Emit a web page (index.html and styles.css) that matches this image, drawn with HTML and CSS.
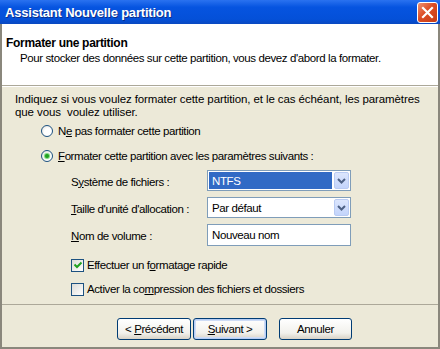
FILE: index.html
```html
<!DOCTYPE html>
<html>
    <head>
        <link rel="stylesheet" href="styles.css">
    </head>
    <body>
        <div class="window">
            <div class="titlebar">
                <span class="title">Assistant Nouvelle partition</span>
                <span class="close">
                    <svg width="13" height="13" viewBox="0 0 13 13"><path d="M2 2 L11 11 M11 2 L2 11" stroke="#FFFFFF" stroke-width="2.2" stroke-linecap="square"/></svg>
                </span>
            </div>
            <div class="frame">
                <div class="header">
                    <div class="heading">Formater une partition</div>
                    <div class="subheading">Pour stocker des données sur cette partition, vous devez d'abord la formater.</div>
                </div>
                <div class="main">
                    <p class="intro">Indiquez si vous voulez formater cette partition, et le cas échéant, les paramètres<br>que vous&nbsp; voulez utiliser.</p>
                    <div class="option">
                        <span class="radio"></span>
                        <span>N<u>e</u> pas formater cette partition</span>
                    </div>
                    <div class="option">
                        <span class="radio checked"></span>
                        <span><u>F</u>ormater cette partition avec les paramètres suivants :</span>
                    </div>
                    <div class="fields">
                        <span class="label">S<u>y</u>stème de fichiers :</span>
                        <div class="select">
                            <span class="value selected">NTFS</span>
                            <span class="drop"><svg width="9" height="6" viewBox="0 0 9 6"><path d="M1 1 L4.5 4.5 L8 1" fill="none" stroke="#4D6185" stroke-width="2"/></svg></span>
                        </div>
                        <span class="label"><u>T</u>aille d'unité d'allocation :</span>
                        <div class="select">
                            <span class="value">Par défaut</span>
                            <span class="drop"><svg width="9" height="6" viewBox="0 0 9 6"><path d="M1 1 L4.5 4.5 L8 1" fill="none" stroke="#4D6185" stroke-width="2"/></svg></span>
                        </div>
                        <span class="label"><u>N</u>om de volume :</span>
                        <div class="textbox">Nouveau nom</div>
                    </div>
                    <div class="check-row">
                        <span class="checkbox">
                            <svg width="10" height="10" viewBox="0 0 10 10"><path d="M1.5 4.5 L4 7 L8.5 2.5" fill="none" stroke="#21A121" stroke-width="2"/></svg>
                        </span>
                        <span>Effectuer un f<u>o</u>rmatage rapide</span>
                    </div>
                    <div class="check-row">
                        <span class="checkbox"></span>
                        <span>Activer la co<u>m</u>pression des fichiers et dossiers</span>
                    </div>
                </div>
                <div class="footer">
                    <button class="btn">&lt; <u>P</u>récédent</button>
                    <button class="btn default"><u>S</u>uivant &gt;</button>
                    <button class="btn cancel">Annuler</button>
                </div>
            </div>
        </div>
    </body>
</html>
```

FILE: styles.css
```css
* {
    box-sizing: border-box;
}

body {
    margin: 0;
    font-family: "Liberation Sans", Arial, sans-serif;
    font-size: 11.5px;
    letter-spacing: -0.4px;
    color: #000000;
}

.window {
    width: 440px;
    height: 349px;
    display: flex;
    flex-direction: column;
}

.titlebar {
    height: 24px;
    background: linear-gradient(#2A72F0, #0654E0 30%, #0450D8 80%, #0A48C0);
    display: flex;
    align-items: center;
    justify-content: space-between;
    padding: 0 2px 0 5px;
}

.title {
    color: #FFFFFF;
    font-weight: bold;
    font-size: 13px;
    letter-spacing: -0.2px;
    text-shadow: 1px 1px #0B2E8A;
    margin-top: 1px;
}

.close {
    width: 21px;
    height: 21px;
    border: 1px solid #FFFFFF;
    border-radius: 3px;
    background: linear-gradient(135deg, #EE9274, #DC4C24 45%, #C63C16);
    display: flex;
    align-items: center;
    justify-content: center;
}

.frame {
    flex: 1;
    display: flex;
    flex-direction: column;
    border: 2px solid #8A877C;
    border-top: none;
}

.header {
    height: 62px;
    background: #FFFFFF;
    border-bottom: 1px solid #ACA899;
    padding: 12px 0 0 4px;
}

.heading {
    font-weight: bold;
    font-size: 12px;
    letter-spacing: -0.3px;
    line-height: 14px;
}

.subheading {
    line-height: 14px;
    margin-top: 1px;
    padding-left: 14px;
}

.main {
    flex: 1;
    background: #ECE9D8;
    border-top: 1px solid #FFFFFF;
    padding: 6px 0 0 13px;
}

.intro {
    margin: 0;
    line-height: 13px;
    letter-spacing: -0.1px;
}

.option {
    height: 20px;
    display: flex;
    align-items: center;
    gap: 5px;
    padding-left: 26px;
    margin-top: 2px;
}

.option + .option {
    margin-top: 5px;
}

.radio {
    width: 12px;
    height: 12px;
    border: 1px solid #1C5180;
    border-radius: 50%;
    background: radial-gradient(circle at 60% 60%, #FFFFFF 40%, #DCDCD6);
    display: flex;
    align-items: center;
    justify-content: center;
}

.radio.checked::after {
    content: "";
    width: 4px;
    height: 4px;
    border-radius: 50%;
    background: #21A121;
    box-shadow: 0 0 1px 1px #6FD36F;
}

.fields {
    display: grid;
    grid-template-columns: 136px 144px;
    grid-template-rows: 21px 21px 22px;
    row-gap: 6px;
    align-items: center;
    margin: 4px 0 0 56px;
}

.label {
    padding-top: 2px;
}

.select {
    height: 21px;
    border: 1px solid #7F9DB9;
    background: #FFFFFF;
    display: flex;
    padding: 1px;
    gap: 2px;
}

.value {
    flex: 1;
    padding-left: 3px;
    display: flex;
    align-items: center;
}

.value.selected {
    background: #316AC5;
    color: #FFFFFF;
}

.drop {
    width: 15px;
    border: 1px solid #B9CBF3;
    border-radius: 2px;
    background: linear-gradient(#DCE6FD, #C3D4FB);
    display: flex;
    align-items: center;
    justify-content: center;
}

.textbox {
    height: 22px;
    border: 1px solid #7F9DB9;
    background: #FFFFFF;
    padding-left: 4px;
    display: flex;
    align-items: center;
}

.check-row {
    height: 20px;
    display: flex;
    align-items: center;
    gap: 3px;
    padding-left: 56px;
    margin-top: 9px;
}

.check-row + .check-row {
    margin-top: 4px;
}

.checkbox {
    width: 13px;
    height: 13px;
    border: 1px solid #1C5180;
    background: linear-gradient(135deg, #DCDCD7, #FFFFFF);
    display: flex;
    align-items: center;
    justify-content: center;
}

.footer {
    height: 43px;
    background: #ECE9D8;
    border-top: 1px solid #ACA899;
    display: flex;
    align-items: flex-start;
    gap: 2px;
    padding: 13px 0 0 115px;
}

.btn {
    width: 74px;
    height: 22px;
    border: 1px solid #003C74;
    border-radius: 3px;
    background: linear-gradient(#FFFFFF, #F2F1EC 70%, #D8D2C6);
    font-family: inherit;
    font-size: 11.5px;
    letter-spacing: -0.4px;
    color: #000000;
    padding: 0;
}

.btn.default {
    box-shadow: inset 0 0 0 1px #B6CDF4, inset 0 0 0 2px #CEDCF6;
}

.btn.cancel {
    width: 73px;
    margin-left: 10px;
}
```
